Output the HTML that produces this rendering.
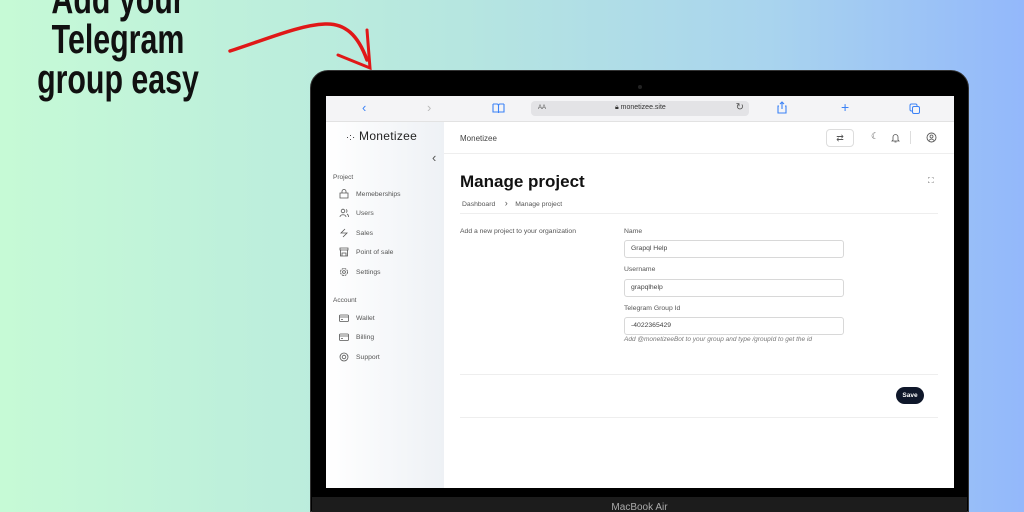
<!DOCTYPE html>
<html><head><meta charset="utf-8"><style>
*{margin:0;padding:0;box-sizing:border-box}
html,body{width:1024px;height:512px;overflow:hidden}
body{position:relative;font-family:"Liberation Sans",sans-serif;background:linear-gradient(90deg,#c6fad6 0%,#b6e6e0 45%,#a9d4ee 75%,#93b8fb 100%)}
.head{position:absolute;left:-40px;width:316px;top:-21px;text-align:center;font-family:"Liberation Sans",sans-serif;font-weight:bold;font-size:41px;line-height:40px;color:#111;transform:scaleX(0.74);white-space:nowrap}
.bezel{position:absolute;left:310px;top:70px;width:659px;height:442px;background:#000;border-radius:18px 18px 0 0;border:1px solid #333}
.bottom{position:absolute;left:312px;top:497px;width:655px;height:15px;background:#1c1c1c;color:#aaa;font-size:10px;text-align:center;line-height:22px;overflow:hidden}
.screen{position:absolute;left:326px;top:96px;width:628px;height:392px;background:#fff;overflow:hidden;font-size:7px;color:#333}
.tb{position:absolute;left:0;top:0;width:628px;height:26px;background:#f4f4f6;border-bottom:1px solid #e2e2e2}
.url{position:absolute;left:205px;top:5px;width:218px;height:15px;background:#e3e3e6;border-radius:4px;font-size:6px;color:#555}
.side{position:absolute;left:0;top:26px;width:118px;height:366px;background:linear-gradient(90deg,#fff,#eef1f5)}
.hdr{position:absolute;left:118px;top:26px;width:510px;height:32px;border-bottom:1px solid #eee}
.sec{position:absolute;left:7px;font-size:6.5px;color:#555}
.it{position:absolute;left:13px;font-size:6.8px;color:#555;display:flex;align-items:center;gap:7px}
.it svg{width:10px;height:10px}
.lbl{position:absolute;left:298px;font-size:6.8px;color:#555}
.inp{position:absolute;left:298px;width:220px;height:18px;border:1px solid #d8d8d8;border-radius:3px;font-size:6.8px;color:#444;padding-left:6px;line-height:16px}
.line{position:absolute;left:134px;width:478px;height:1px;background:#eee}
</style></head><body>
<div class="head">Add your<br>Telegram<br>group easy</div>
<svg style="position:absolute;left:0;top:0" width="400" height="90"><path d="M230 51 C270 38 300 25 325 24 C345 23 358 35 367 60" stroke="#e01818" stroke-width="3.5" fill="none" stroke-linecap="round"/><path d="M367 30 L370 68 L338 55" stroke="#e01818" stroke-width="3" fill="none" stroke-linecap="round"/></svg>
<div class="bezel"></div>
<div style="position:absolute;left:638px;top:85px;width:4px;height:4px;border-radius:50%;background:#222"></div>
<div class="bottom">MacBook Air</div>
<div class="screen">
<div class="tb">
<span style="position:absolute;left:36px;top:4px;color:#3b82f6;font-size:13px">‹</span>
<span style="position:absolute;left:101px;top:4px;color:#bbb;font-size:13px">›</span>
<svg style="position:absolute;left:166px;top:7px" width="13" height="11"><path d="M1 1h4c1 0 1.5 1 1.5 2v7M12 1H8c-1 0-1.5 1-1.5 2M1 1v8h5.5M12 1v8H6.5" stroke="#3b82f6" fill="none" stroke-width="1.1"/></svg>
<div class="url"><span style="position:absolute;left:7px;top:4px">AA</span><span style="position:absolute;left:84px;top:3px;font-size:7px;color:#333">🔒︎ monetizee.site</span><span style="position:absolute;right:5px;top:1px;font-size:10px">↻</span></div>
<svg style="position:absolute;left:451px;top:5px" width="10" height="13"><path d="M2 5H1v7h8V5H8M5 1v7M3 3l2-2 2 2" stroke="#3b82f6" fill="none" stroke-width="1.1"/></svg>
<span style="position:absolute;left:515px;top:3px;color:#3b82f6;font-size:14px">+</span>
<svg style="position:absolute;left:583px;top:7px" width="12" height="12"><rect x="1" y="1" width="7" height="7" rx="1.5" stroke="#3b82f6" fill="none"/><rect x="3.5" y="3.5" width="7" height="7" rx="1.5" stroke="#3b82f6" fill="#f4f4f6"/></svg>
</div>
<div class="side">
<div style="position:absolute;left:20px;top:7px;font-size:12px;color:#222;letter-spacing:.3px"><span style="font-size:9px">·:·</span> Monetizee</div>
<span style="position:absolute;left:106px;top:28px;font-size:13px;color:#555">‹</span>
<div class="sec" style="top:52px">Project</div>
<div class="it" style="top:67px"><svg viewBox="0 0 10 10"><path d="M1 4h8v5H1zM3 4V2.5a2 2 0 014 0V4" stroke="#555" fill="none" stroke-width=".8"/></svg>Memeberships</div>
<div class="it" style="top:86px"><svg viewBox="0 0 10 10"><circle cx="4" cy="3" r="1.8" stroke="#555" fill="none" stroke-width=".8"/><path d="M1 9c0-3 6-3 6 0M7 1.5a1.6 1.6 0 010 3M8 6c1 .5 1.5 1.5 1.5 3" stroke="#555" fill="none" stroke-width=".8"/></svg>Users</div>
<div class="it" style="top:106px"><svg viewBox="0 0 10 10"><path d="M6 1L2 5h6L4 9" stroke="#555" fill="none" stroke-width=".8"/></svg>Sales</div>
<div class="it" style="top:125px"><svg viewBox="0 0 10 10"><path d="M1 1h8v2H1zM1.5 3v6h7V3M3 6h4v3H3z" stroke="#555" fill="none" stroke-width=".8"/></svg>Point of sale</div>
<div class="it" style="top:145px"><svg viewBox="0 0 10 10"><circle cx="5" cy="5" r="3.5" stroke="#555" fill="none" stroke-width=".9" stroke-dasharray="2 .8"/><circle cx="5" cy="5" r="1.4" stroke="#555" fill="none" stroke-width=".8"/></svg>Settings</div>
<div class="sec" style="top:175px">Account</div>
<div class="it" style="top:191px"><svg viewBox="0 0 10 10"><rect x=".5" y="2" width="9" height="6.5" rx="1" stroke="#555" fill="none" stroke-width=".8"/><path d="M.5 4h9M2 6.5h2" stroke="#555" stroke-width=".8"/></svg>Wallet</div>
<div class="it" style="top:210px"><svg viewBox="0 0 10 10"><rect x=".5" y="2" width="9" height="6.5" rx="1" stroke="#555" fill="none" stroke-width=".8"/><path d="M.5 4h9M2 6.5h2" stroke="#555" stroke-width=".8"/></svg>Billing</div>
<div class="it" style="top:230px"><svg viewBox="0 0 10 10"><circle cx="5" cy="5" r="4" stroke="#555" fill="none" stroke-width=".8"/><circle cx="5" cy="5" r="1.8" stroke="#555" fill="none" stroke-width=".8"/></svg>Support</div>
</div>
<div class="hdr">
<span style="position:absolute;left:16px;top:12px;font-size:8px;color:#444">Monetizee</span>
<div style="position:absolute;left:382px;top:7px;width:28px;height:18px;border:1px solid #ddd;border-radius:4px;text-align:center;font-size:9px;line-height:16px;color:#555">⇄</div>
<span style="position:absolute;left:427px;top:9px;font-size:9px;color:#555">☾</span>
<svg style="position:absolute;left:447px;top:11px" width="9" height="10"><path d="M2 7V4a2.5 2.5 0 015 0v3l1 1H1zM3.5 9h2" stroke="#555" fill="none" stroke-width=".8"/></svg>
<div style="position:absolute;left:466px;top:9px;width:1px;height:13px;background:#ddd"></div>
<svg style="position:absolute;left:482px;top:10px" width="11" height="11"><circle cx="5.5" cy="5.5" r="4.5" stroke="#555" fill="none" stroke-width=".9"/><circle cx="5.5" cy="4.5" r="1.5" stroke="#555" fill="none" stroke-width=".8"/><path d="M3 8.5c1.5-2 3.5-2 5 0" stroke="#555" fill="none" stroke-width=".8"/></svg>
</div>
<div style="position:absolute;left:134px;top:76px;font-size:17px;font-weight:bold;color:#111">Manage project</div>
<span style="position:absolute;left:602px;top:80px;font-size:8px;color:#666">⛶</span>
<div style="position:absolute;left:136px;top:102px;font-size:6.8px;color:#555">Dashboard &nbsp;&nbsp;&nbsp; <span style="font-size:9px">›</span> &nbsp;&nbsp; Manage project</div>
<div class="line" style="top:117px"></div>
<div style="position:absolute;left:134px;top:132px;font-size:6.8px;color:#555">Add a new project to your organization</div>
<div class="lbl" style="top:132px">Name</div>
<div class="inp" style="top:144px">Grapql Help</div>
<div class="lbl" style="top:170px">Username</div>
<div class="inp" style="top:183px">grapqlhelp</div>
<div class="lbl" style="top:209px">Telegram Group Id</div>
<div class="inp" style="top:221px">-4022365429</div>
<div style="position:absolute;left:298px;top:240px;font-size:6.5px;color:#777;font-style:italic">Add @monetizeeBot to your group and type /groupId to get the id</div>
<div class="line" style="top:278px"></div>
<div style="position:absolute;left:570px;top:291px;width:28px;height:17px;background:#0f172a;border-radius:9px;color:#fff;font-size:6.5px;font-weight:bold;text-align:center;line-height:17px">Save</div>
<div class="line" style="top:321px"></div>
</div>
</body></html>
